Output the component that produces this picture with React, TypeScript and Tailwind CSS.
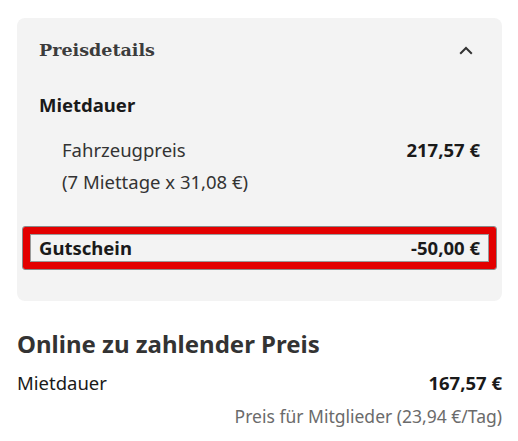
import React from "react";

const sans = { fontFamily: '"Noto Sans", "Open Sans", sans-serif' };

const ChevronUp: React.FC = () => (
  <svg width="14" height="9" viewBox="0 0 14 9" fill="none">
    <path d="M1.2 7.8 L7 2 L12.8 7.8" stroke="#333" strokeWidth="2" />
  </svg>
);

const App: React.FC = () => {
  return (
    <main className="min-h-screen bg-white pt-[18px] pl-[17px] pr-[16px]" style={sans}>
      {/* Preisdetails card */}
      <div className="rounded-[8px] bg-[#f3f3f3] px-[22px] pt-[20px] pb-[31px]">
        <div className="flex items-center justify-between h-[24px]">
          <h2
            className="text-[17.5px] font-bold text-[#3c3c3c] leading-[24px]"
            style={{ fontFamily: '"DejaVu Serif", "Liberation Serif", serif' }}
          >
            Preisdetails
          </h2>
          <div className="mr-[7px]">
            <ChevronUp />
          </div>
        </div>

        <h3 className="mt-[31px] text-[18.5px] font-bold text-[#1a1a1a] leading-[24px]">Mietdauer</h3>

        <div className="mt-[17px] pl-[23px] text-[18.5px] text-[#333] leading-[32px]">
          <div className="flex justify-between">
            <span>Fahrzeugpreis</span>
            <span className="font-bold text-[#1a1a1a]">217,57 €</span>
          </div>
          <div>(7 Miettage x 31,08 €)</div>
        </div>

        {/* highlighted voucher row */}
        <div className="mt-[28px] -mx-[17px] rounded-[3px] border border-[#8a8a8a]">
          <div className="rounded-[2px] border-[7px] border-[#e30000]">
            <div className="border border-[#9a9a9a] px-[8px] flex justify-between items-center h-[28px] text-[18.5px] font-bold text-[#1a1a1a]">
              <span>Gutschein</span>
              <span>-50,00 €</span>
            </div>
          </div>
        </div>
      </div>

      {/* Online price */}
      <h2 className="mt-[27px] text-[24px] font-bold text-[#333] leading-[32px]">Online zu zahlender Preis</h2>
      <div className="mt-[9px] flex justify-between text-[18.5px] leading-[28px] text-[#1a1a1a]">
        <span>Mietdauer</span>
        <span className="font-bold">167,57 €</span>
      </div>
      <div className="mt-[5px] text-right text-[17.5px] leading-[28px] text-[#6b6b6b]">
        Preis für Mitglieder (23,94 €/Tag)
      </div>
    </main>
  );
};

export default App;
